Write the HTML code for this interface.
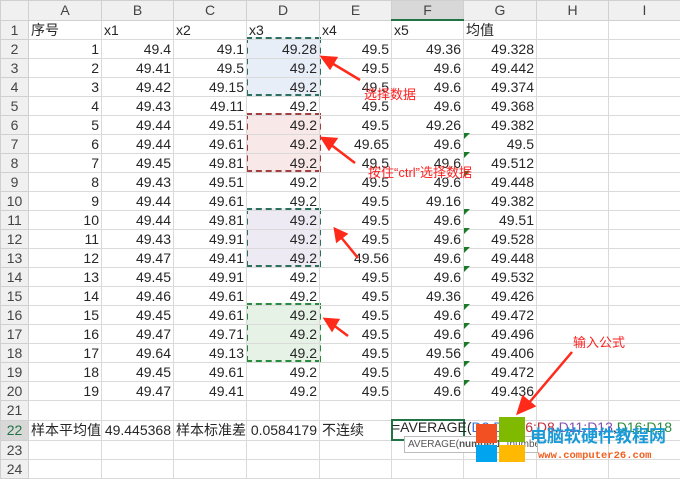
<!DOCTYPE html><html><head><meta charset="utf-8"><style>
body{margin:0;width:680px;height:473px;overflow:hidden;background:#fff;font-family:"Liberation Sans","Noto Sans CJK SC",sans-serif;position:relative}
table{border-collapse:collapse;table-layout:fixed;position:absolute;left:0;top:0;width:680px}
td{height:18px;border:1px solid #dadada;padding:0 2px;font-size:14px;color:#262626;white-space:nowrap;overflow:visible;text-align:right;line-height:18px}
tr:first-child td{background:#f0f0f0;text-align:center;color:#444;border-color:#d0d0d0}
td:first-child{background:#f0f0f0;text-align:center;color:#444;padding:0;border-color:#d0d0d0}
td.l{text-align:left}
.fh{background:#d8d8d8!important;border-bottom:2px solid #217346!important}
.sel{background:#d8d8d8!important;color:#217346!important}
.bx{position:absolute;border:2px dashed}
.tri{position:absolute;width:0;height:0;border-top:6px solid #1a7a2a;border-right:6px solid transparent}
.ann{position:absolute;color:#ff2020;font-size:13px;font-family:"Liberation Sans","Noto Sans CJK SC",sans-serif;white-space:nowrap}
</style></head><body>
<div class="bx" style="left:246px;top:37px;width:71px;height:55px;border-color:#2e7060;background:#e8eef8"></div>
<div class="bx" style="left:246px;top:113px;width:71px;height:55px;border-color:#a04040;background:#f8e8e8"></div>
<div class="bx" style="left:246px;top:208px;width:71px;height:55px;border-color:#2e7060;background:#eeeaf4"></div>
<div class="bx" style="left:246px;top:303px;width:71px;height:55px;border-color:#2a8a40;background:#e6f2e6"></div>
<table>
<colgroup><col style="width:28px"><col style="width:73px"><col style="width:72px"><col style="width:73px"><col style="width:73px"><col style="width:72px"><col style="width:72px"><col style="width:73px"><col style="width:72px"><col style="width:72px"></colgroup>
<tr><td></td><td>A</td><td>B</td><td>C</td><td>D</td><td>E</td><td class="fh">F</td><td>G</td><td>H</td><td>I</td></tr>
<tr><td>1</td><td class="l">序号</td><td class="l">x1</td><td class="l">x2</td><td class="l">x3</td><td class="l">x4</td><td class="l">x5</td><td class="l">均值</td><td></td><td></td></tr>
<tr><td>2</td><td>1</td><td>49.4</td><td>49.1</td><td>49.28</td><td>49.5</td><td>49.36</td><td>49.328</td><td></td><td></td></tr>
<tr><td>3</td><td>2</td><td>49.41</td><td>49.5</td><td>49.2</td><td>49.5</td><td>49.6</td><td>49.442</td><td></td><td></td></tr>
<tr><td>4</td><td>3</td><td>49.42</td><td>49.15</td><td>49.2</td><td>49.5</td><td>49.6</td><td>49.374</td><td></td><td></td></tr>
<tr><td>5</td><td>4</td><td>49.43</td><td>49.11</td><td>49.2</td><td>49.5</td><td>49.6</td><td>49.368</td><td></td><td></td></tr>
<tr><td>6</td><td>5</td><td>49.44</td><td>49.51</td><td>49.2</td><td>49.5</td><td>49.26</td><td>49.382</td><td></td><td></td></tr>
<tr><td>7</td><td>6</td><td>49.44</td><td>49.61</td><td>49.2</td><td>49.65</td><td>49.6</td><td>49.5</td><td></td><td></td></tr>
<tr><td>8</td><td>7</td><td>49.45</td><td>49.81</td><td>49.2</td><td>49.5</td><td>49.6</td><td>49.512</td><td></td><td></td></tr>
<tr><td>9</td><td>8</td><td>49.43</td><td>49.51</td><td>49.2</td><td>49.5</td><td>49.6</td><td>49.448</td><td></td><td></td></tr>
<tr><td>10</td><td>9</td><td>49.44</td><td>49.61</td><td>49.2</td><td>49.5</td><td>49.16</td><td>49.382</td><td></td><td></td></tr>
<tr><td>11</td><td>10</td><td>49.44</td><td>49.81</td><td>49.2</td><td>49.5</td><td>49.6</td><td>49.51</td><td></td><td></td></tr>
<tr><td>12</td><td>11</td><td>49.43</td><td>49.91</td><td>49.2</td><td>49.5</td><td>49.6</td><td>49.528</td><td></td><td></td></tr>
<tr><td>13</td><td>12</td><td>49.47</td><td>49.41</td><td>49.2</td><td>49.56</td><td>49.6</td><td>49.448</td><td></td><td></td></tr>
<tr><td>14</td><td>13</td><td>49.45</td><td>49.91</td><td>49.2</td><td>49.5</td><td>49.6</td><td>49.532</td><td></td><td></td></tr>
<tr><td>15</td><td>14</td><td>49.46</td><td>49.61</td><td>49.2</td><td>49.5</td><td>49.36</td><td>49.426</td><td></td><td></td></tr>
<tr><td>16</td><td>15</td><td>49.45</td><td>49.61</td><td>49.2</td><td>49.5</td><td>49.6</td><td>49.472</td><td></td><td></td></tr>
<tr><td>17</td><td>16</td><td>49.47</td><td>49.71</td><td>49.2</td><td>49.5</td><td>49.6</td><td>49.496</td><td></td><td></td></tr>
<tr><td>18</td><td>17</td><td>49.64</td><td>49.13</td><td>49.2</td><td>49.5</td><td>49.56</td><td>49.406</td><td></td><td></td></tr>
<tr><td>19</td><td>18</td><td>49.45</td><td>49.61</td><td>49.2</td><td>49.5</td><td>49.6</td><td>49.472</td><td></td><td></td></tr>
<tr><td>20</td><td>19</td><td>49.47</td><td>49.41</td><td>49.2</td><td>49.5</td><td>49.6</td><td>49.436</td><td></td><td></td></tr>
<tr><td>21</td><td></td><td></td><td></td><td></td><td></td><td></td><td></td><td></td><td></td></tr>
<tr><td class="sel">22</td><td class="l">样本平均值</td><td>49.445368</td><td class="l">样本标准差</td><td>0.0584179</td><td class="l">不连续</td><td style="border:2px solid #217346"></td><td></td><td></td><td></td></tr>
<tr><td>23</td><td></td><td></td><td></td><td></td><td></td><td></td><td></td><td></td><td></td></tr>
<tr><td>24</td><td></td><td></td><td></td><td></td><td></td><td></td><td></td><td></td><td></td></tr>
</table>
<div style="position:absolute;left:392px;top:418px;font-size:14px;line-height:18px;color:#262626;white-space:nowrap">=AVERAGE(<span style="color:#3b6fd0">D2:D4</span>,<span style="color:#c03040">D6:D8</span>,<span style="color:#8050b0">D11:D13</span>,<span style="color:#2a8a40">D16:D18</span></div>
<div class="tri" style="left:464px;top:133px"></div><div class="tri" style="left:464px;top:152px"></div><div class="tri" style="left:464px;top:171px"></div><div class="tri" style="left:464px;top:209px"></div><div class="tri" style="left:464px;top:228px"></div><div class="tri" style="left:464px;top:247px"></div><div class="tri" style="left:464px;top:266px"></div><div class="tri" style="left:464px;top:304px"></div><div class="tri" style="left:464px;top:323px"></div><div class="tri" style="left:464px;top:342px"></div><div class="tri" style="left:464px;top:361px"></div><div class="tri" style="left:464px;top:380px"></div>
<div style="position:absolute;left:404px;top:436px;width:126px;height:15px;overflow:hidden;background:#fff;border:1px solid #bbb;font-size:10px;color:#555;line-height:15px;padding:0 3px;white-space:nowrap">AVERAGE(<b>number1</b>, [number2], ...)</div>
<div class="ann" style="left:364px;top:84px">选择数据</div>
<div class="ann" style="left:368px;top:162px">按住“ctrl”选择数据</div>
<div class="ann" style="left:573px;top:332px">输入公式</div>
<svg style="position:absolute;left:0;top:0" width="680" height="473">
<g stroke="#ff2a1a" stroke-width="2.5" fill="#ff2a1a">
<line x1="360" y1="80" x2="330" y2="62"/><polygon points="322,57 336,58 330,68"/>
<line x1="355" y1="163" x2="330" y2="144"/><polygon points="322,138 336,139 329,149"/>
<line x1="358" y1="258" x2="340" y2="236"/><polygon points="335,229 346,234 337,241"/>
<line x1="348" y1="336" x2="332" y2="324"/><polygon points="325,319 338,320 332,330"/>
<line x1="572" y1="352" x2="528" y2="404"/><polygon points="518,413 523,397 534,406"/>
</g>
<rect x="476" y="424" width="21" height="19" fill="#f25022"/>
<rect x="499" y="417" width="26" height="25" fill="#7fba00"/>
<rect x="476" y="445" width="21" height="17" fill="#00a4ef"/>
<rect x="499" y="445" width="26" height="17" fill="#ffb900"/>
<text x="530" y="442" font-size="17" font-weight="bold" fill="#1a9ad6" font-family="Noto Sans CJK SC,sans-serif">电脑软硬件教程网</text>
<text x="538" y="458" font-size="10.5" font-weight="bold" fill="#f06020" font-family="Liberation Mono,monospace">www.computer26.com</text>
</svg>
</body></html>
